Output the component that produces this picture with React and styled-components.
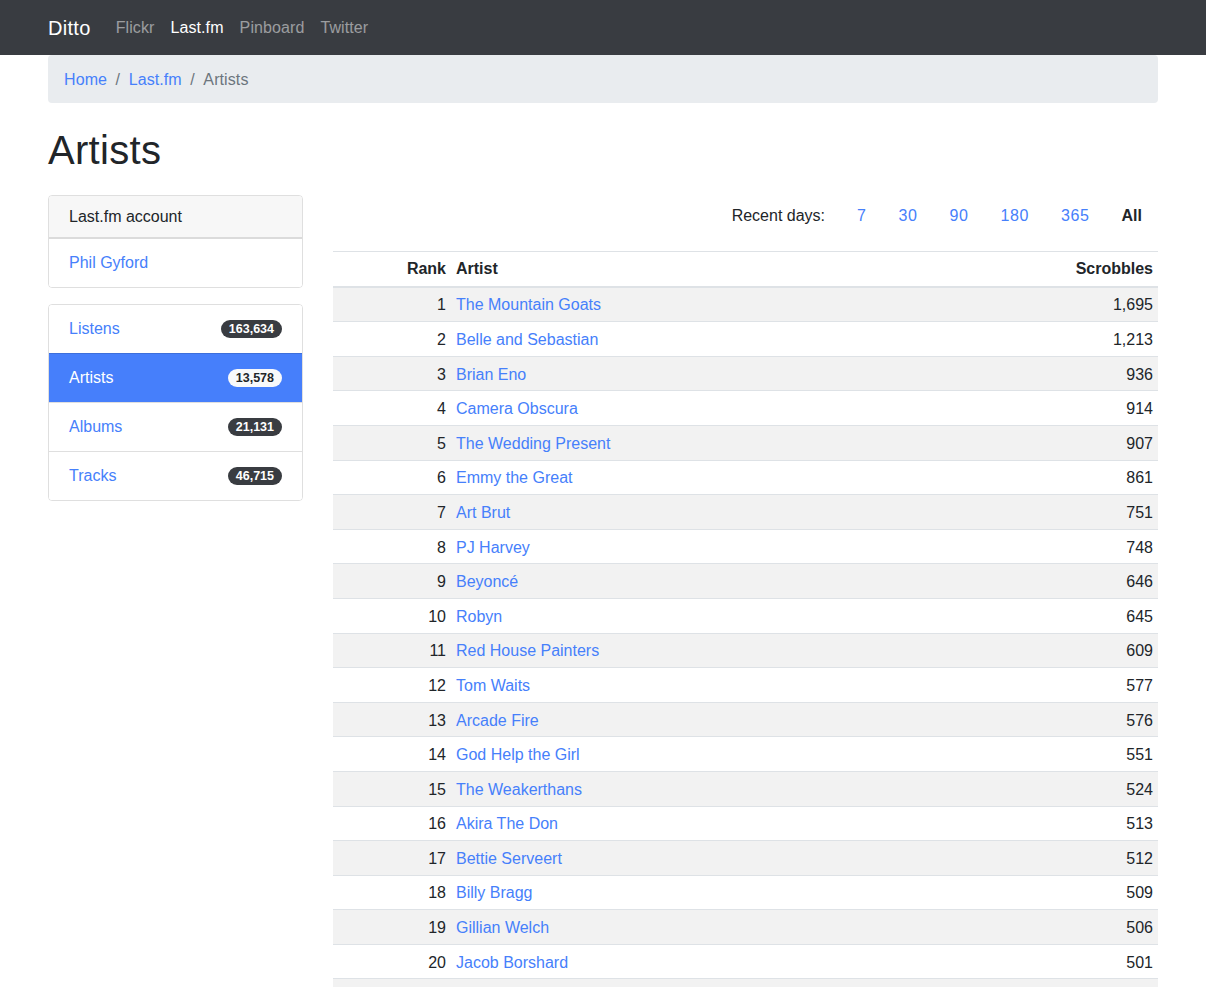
import React from "react";
import styled, { createGlobalStyle } from "styled-components";

const Global = createGlobalStyle`
  * { box-sizing: border-box; }
  body {
    margin: 0;
    font-family: "Liberation Sans", Arial, sans-serif;
    font-size: 16px;
    line-height: 1.5;
    color: #212529;
    background: #fff;
  }
  a { text-decoration: none; }
`;

const LINK = "#4680fb";

const NavBar = styled.nav`
  height: 55px;
  background: #393c41;
  display: flex;
  align-items: center;
  padding: 0 48px;
`;

const Brand = styled.a`
  color: #fff;
  font-size: 20px;
  line-height: 30px;
  letter-spacing: 0.3px;
  margin-right: 17px;
`;

const NavLink = styled.a`
  padding: 0 8px;
  color: ${(p) => (p.$active ? "#fff" : "rgba(255,255,255,0.5)")};
  font-size: 16px;
  letter-spacing: 0.1px;
`;

const Container = styled.div`
  width: 1110px;
  margin: 0 auto;
`;

const Breadcrumb = styled.ol`
  list-style: none;
  margin: 0;
  padding: 13px 16px 11px;
  background: #e9ecef;
  border-radius: 4px;
  display: flex;
  line-height: 24px;
`;

const Crumb = styled.li`
  color: #6c757d;
  letter-spacing: 0.1px;
  & + &::before {
    content: "/";
    padding: 0 8.5px;
    color: #6c757d;
  }
  a { color: ${LINK}; }
`;

const Title = styled.h1`
  font-size: 40px;
  font-weight: 500;
  line-height: 48px;
  letter-spacing: 0.3px;
  margin: 23px 0 21px;
`;

const Layout = styled.div`
  display: grid;
  grid-template-columns: 255px 825px;
  column-gap: 30px;
  align-items: start;
`;

const Sidebar = styled.div`
  display: flex;
  flex-direction: column;
  gap: 16px;
`;

const Card = styled.div`
  border: 1px solid rgba(0, 0, 0, 0.125);
  border-radius: 4px;
  overflow: hidden;
`;

const CardHeader = styled.h2`
  margin: 0;
  font-size: 16px;
  font-weight: 500;
  line-height: 19px;
  padding: 11px 20px;
  background: #f7f7f7;
  border-bottom: 2px solid rgba(0, 0, 0, 0.11);
`;

const ListItem = styled.a`
  display: flex;
  justify-content: space-between;
  align-items: center;
  padding: 12px 20px;
  line-height: 24px;
  color: ${(p) => (p.$active ? "#fff" : LINK)};
  background: ${(p) => (p.$active ? "#467ffb" : "#fff")};
  & + & { border-top: 1px solid rgba(0, 0, 0, 0.125); }
`;

const Badge = styled.span`
  font-size: 12.5px;
  font-weight: 700;
  line-height: 1;
  padding: 3px 8px 3px;
  border-radius: 10rem;
  background: ${(p) => (p.$light ? "#f8f9fa" : "#393c41")};
  color: ${(p) => (p.$light ? "#212529" : "#fff")};
`;

const Main = styled.div`
  padding-top: 1px;
`;

const DaysNav = styled.div`
  display: flex;
  justify-content: flex-end;
  line-height: 24px;
  margin-bottom: 15px;
`;

const DaysLabel = styled.span`
  padding: 8px 16px;
`;

const DayLink = styled.a`
  padding: 8px 16px;
  letter-spacing: ${(p) => (p.$active ? "0" : "0.6px")};
  color: ${(p) => (p.$active ? "#212529" : LINK)};
  font-weight: ${(p) => (p.$active ? 700 : 400)};
`;

const Table = styled.table`
  width: 100%;
  border-collapse: collapse;
`;

const Th = styled.th`
  padding: 5.3px 5px 4.3px;
  line-height: 24px;
  font-weight: 700;
  text-align: ${(p) => p.$align || "left"};
  border-top: 1px solid #dee2e6;
  border-bottom: 2px solid #dee2e6;
  width: ${(p) => p.$w || "auto"};
`;

const Tr = styled.tr`
  background: ${(p) => (p.$striped ? "#f2f2f2" : "#fff")};
`;

const Td = styled.td`
  padding: 5.8px 5px 3.8px;
  line-height: 24px;
  border-top: 1px solid #dee2e6;
  text-align: ${(p) => p.$align || "left"};
  a { color: ${LINK}; }
`;

const artists = [
  ["The Mountain Goats", "1,695"],
  ["Belle and Sebastian", "1,213"],
  ["Brian Eno", "936"],
  ["Camera Obscura", "914"],
  ["The Wedding Present", "907"],
  ["Emmy the Great", "861"],
  ["Art Brut", "751"],
  ["PJ Harvey", "748"],
  ["Beyoncé", "646"],
  ["Robyn", "645"],
  ["Red House Painters", "609"],
  ["Tom Waits", "577"],
  ["Arcade Fire", "576"],
  ["God Help the Girl", "551"],
  ["The Weakerthans", "524"],
  ["Akira The Don", "513"],
  ["Bettie Serveert", "512"],
  ["Billy Bragg", "509"],
  ["Gillian Welch", "506"],
  ["Jacob Borshard", "501"],
];

export default function App() {
  return (
    <>
      <Global />
      <NavBar>
        <Brand href="#">Ditto</Brand>
        <NavLink href="#">Flickr</NavLink>
        <NavLink href="#" $active>Last.fm</NavLink>
        <NavLink href="#">Pinboard</NavLink>
        <NavLink href="#">Twitter</NavLink>
      </NavBar>
      <Container>
        <Breadcrumb>
          <Crumb><a href="#">Home</a></Crumb>
          <Crumb><a href="#">Last.fm</a></Crumb>
          <Crumb>Artists</Crumb>
        </Breadcrumb>
        <Title>Artists</Title>
        <Layout>
          <Sidebar>
            <Card>
              <CardHeader>Last.fm account</CardHeader>
              <ListItem href="#">Phil Gyford</ListItem>
            </Card>
            <Card>
              <ListItem href="#">Listens <Badge>163,634</Badge></ListItem>
              <ListItem href="#" $active>Artists <Badge $light>13,578</Badge></ListItem>
              <ListItem href="#">Albums <Badge>21,131</Badge></ListItem>
              <ListItem href="#">Tracks <Badge>46,715</Badge></ListItem>
            </Card>
          </Sidebar>
          <Main>
            <DaysNav>
              <DaysLabel>Recent days:</DaysLabel>
              <DayLink href="#">7</DayLink>
              <DayLink href="#">30</DayLink>
              <DayLink href="#">90</DayLink>
              <DayLink href="#">180</DayLink>
              <DayLink href="#">365</DayLink>
              <DayLink href="#" $active>All</DayLink>
            </DaysNav>
            <Table>
              <thead>
                <tr>
                  <Th $align="right" $w="118px">Rank</Th>
                  <Th>Artist</Th>
                  <Th $align="right">Scrobbles</Th>
                </tr>
              </thead>
              <tbody>
                {artists.map(([name, count], i) => (
                  <Tr key={name} $striped={i % 2 === 0}>
                    <Td $align="right">{i + 1}</Td>
                    <Td><a href="#">{name}</a></Td>
                    <Td $align="right">{count}</Td>
                  </Tr>
                ))}
                <Tr $striped>
                  <Td $align="right">&nbsp;</Td>
                  <Td>&nbsp;</Td>
                  <Td $align="right">&nbsp;</Td>
                </Tr>
              </tbody>
            </Table>
          </Main>
        </Layout>
      </Container>
    </>
  );
}
